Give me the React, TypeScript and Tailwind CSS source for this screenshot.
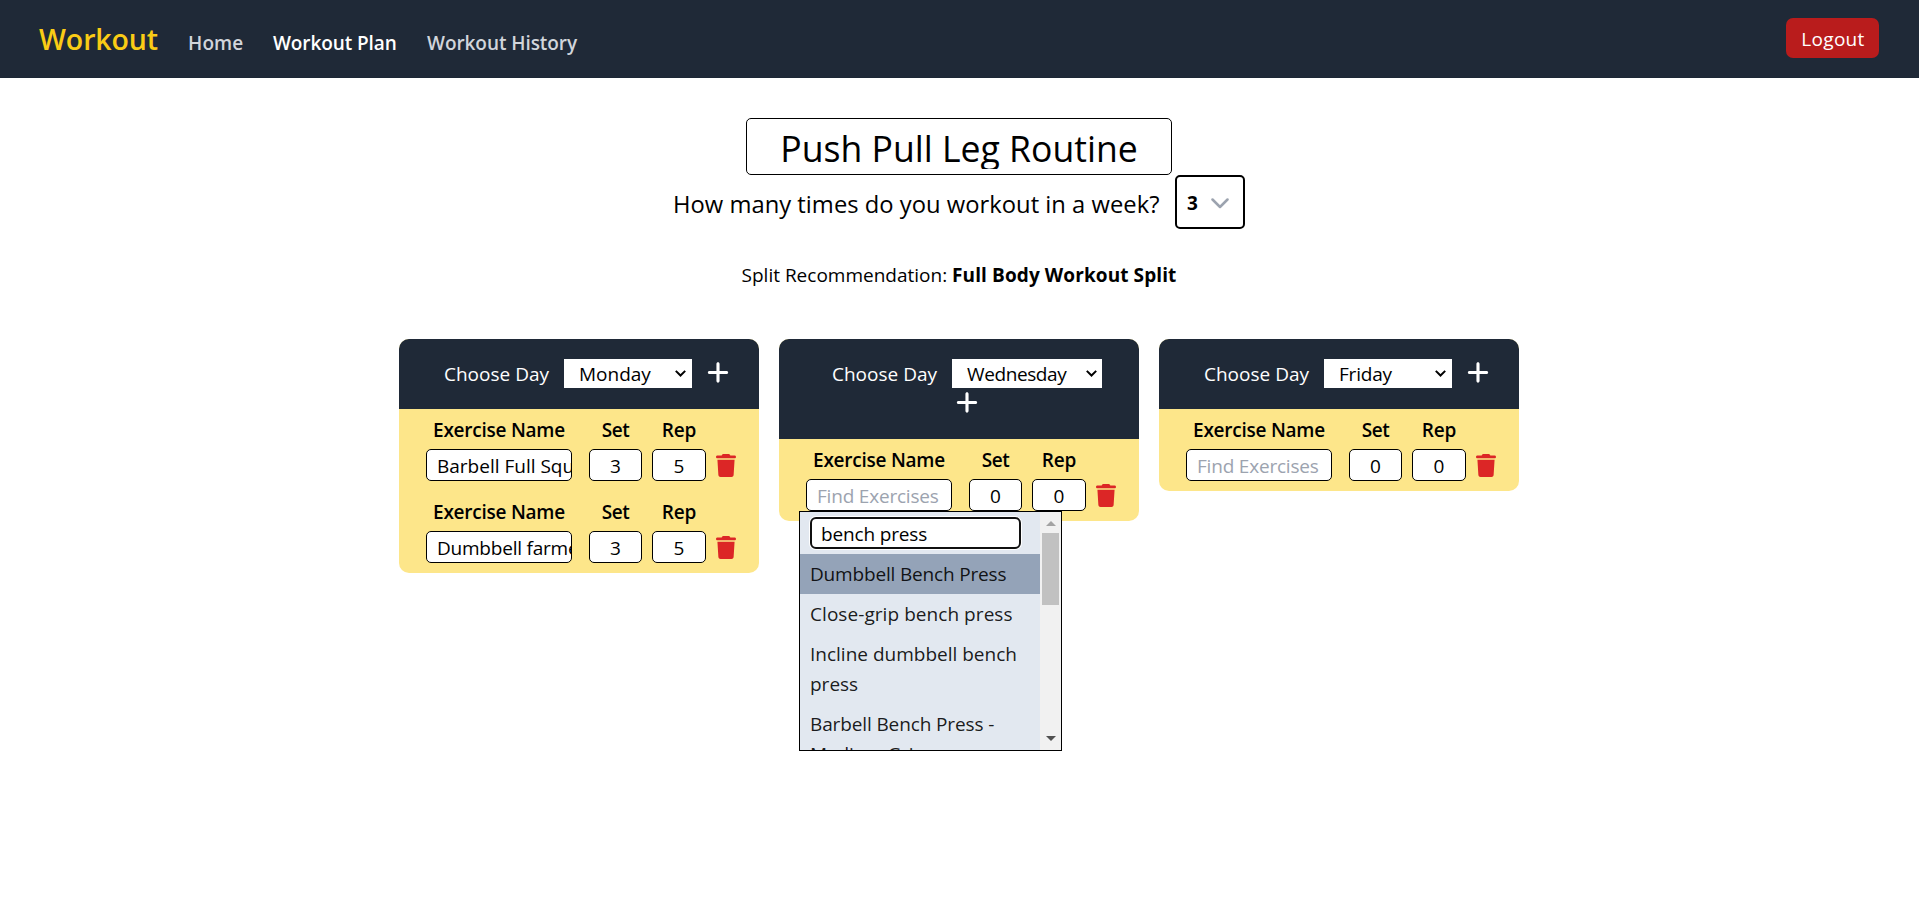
import type { ReactNode } from "react";
import { FaPlus, FaTrash } from "react-icons/fa6";

type Entry = { name: string; set: string; rep: string; nameTracking?: string };

const fieldBase =
  "h-8 rounded-[5px] border border-black bg-white pt-px text-[19px] text-black outline-none placeholder:text-[#9ca3af]";

function NavBar() {
  return (
    <nav className="flex h-[78px] items-center border-b border-[#1c2735] bg-[#1f2937] pl-[39px] pr-10">
      <a className="w-[149px] pt-0.5 text-[28.5px] font-semibold tracking-[-0.1px] text-[#facc15]">Workout</a>
      <div className="mt-[9px] flex flex-1 text-[19px] font-semibold leading-[30px] text-[#d1d5db]">
        <a className="w-[85px] tracking-[0.1px]">Home</a>
        <a className="w-[154px] tracking-[-0.1px] text-white">Workout Plan</a>
        <a className="tracking-[-0.07px]">Workout History</a>
      </div>
      <button className="mb-px h-10 w-[93px] rounded-[7px] bg-[#b91c1c] pl-px pt-[3px] text-[19px] tracking-[0.3px] text-white">
        Logout
      </button>
    </nav>
  );
}

function DaySelect({ day, className }: { day: string; className: string }) {
  return (
    <div className={`flex h-[29px] items-center justify-between bg-white leading-[31px] text-black ${className}`}>
      <span className="h-[29px]">{day}</span>
      <svg width="11" height="7" viewBox="0 0 11 7" fill="none" stroke="#000" strokeWidth="2">
        <path d="M0.8 0.9L5.5 5.5L10.2 0.9" />
      </svg>
    </div>
  );
}

function ExerciseRow({ entry, children }: { entry: Entry; children?: ReactNode }) {
  return (
    <div className="flex h-[82px] pl-[27px] pt-1.5 font-semibold leading-[30px]">
      <div className="relative flex w-[146px] flex-col gap-1 text-center">
        <span className="tracking-[-0.24px]">Exercise Name</span>
        <input
          readOnly
          placeholder="Find Exercises"
          value={entry.name}
          className={`${fieldBase} w-full pl-2.5 font-normal placeholder:tracking-[-0.2px] ${entry.nameTracking ?? ""}`}
        />
        {children}
      </div>
      <div className="ml-[17px] flex w-[53px] flex-col gap-1 text-center">
        <span className="tracking-[-0.5px]">Set</span>
        <input readOnly value={entry.set} className={`${fieldBase} w-full text-center font-normal`} />
      </div>
      <div className="ml-2.5 flex w-[54px] flex-col gap-1 text-center">
        <span className="tracking-[-0.2px]">Rep</span>
        <input readOnly value={entry.rep} className={`${fieldBase} w-full text-center font-normal`} />
      </div>
      <FaTrash className="ml-2.5 mt-[39px] h-[23px] w-5" color="#dc2626" />
    </div>
  );
}

function DayCard({
  day,
  headerClass,
  selectClass,
  plusClass,
  children,
}: {
  day: string;
  headerClass: string;
  selectClass: string;
  plusClass: string;
  children: ReactNode;
}) {
  return (
    <section className="w-[360px] rounded-[10px] bg-[#fde68a]">
      <header
        className={`flex flex-wrap content-start items-start gap-y-px rounded-t-[10px] bg-[#1f2937] pt-5 text-white ${headerClass}`}
      >
        <span className="h-[29px] w-[121px] pl-px leading-[31px]">Choose Day</span>
        <DaySelect day={day} className={selectClass} />
        <FaPlus className={`h-[25px] w-[22px] ${plusClass}`} />
      </header>
      {children}
    </section>
  );
}

function ExerciseMenu() {
  return (
    <div className="absolute left-[-7px] top-[66px] z-10 flex h-60 w-[263px] overflow-hidden border border-black bg-[#e2e8f0] text-left font-normal text-black/90">
      <div className="w-60">
        <div className="h-[42px] pl-2.5 pt-[5px]">
          <input
            readOnly
            value="bench press"
            className="block h-8 w-[211px] rounded-md border-2 border-[#101010] bg-white pl-[9px] pt-px tracking-[-0.15px] text-black shadow-[0_0_0_1px_#fff] outline-none"
          />
        </div>
        <div className="bg-[#94a3b8] px-2.5 py-[5px] tracking-[-0.17px]">Dumbbell Bench Press</div>
        <div className="px-2.5 py-[5px] tracking-[0.06px]">Close-grip bench press</div>
        <div className="px-2.5 py-[5px]">Incline dumbbell bench press</div>
        <div className="px-2.5 py-[5px] tracking-[-0.12px]">
          Barbell Bench Press -<br />
          Medium Grip
        </div>
      </div>
      <div className="flex w-[21px] flex-col items-center justify-between bg-[#f1f1f1] pb-[9px] pt-[9px]">
        <svg width="10" height="5" viewBox="0 0 10 5" fill="#a3a3a3">
          <path d="M0 5L5 0L10 5Z" />
        </svg>
        <div className="mb-auto mt-[7px] h-[72px] w-[17px] bg-[#c1c1c1]" />
        <svg width="10" height="5" viewBox="0 0 10 5" fill="#505050">
          <path d="M0 0L5 5L10 0Z" />
        </svg>
      </div>
    </div>
  );
}

export default function App() {
  return (
    <div className="min-h-screen bg-white font-['Open_Sans',sans-serif] text-[19px] text-black">
      <NavBar />
      <main className="flex flex-col items-center pr-px pt-10">
        <div className="h-[57px] w-[426px] rounded-[5px] border border-black pt-1">
          <div className="h-[46px] overflow-hidden text-center text-[35.6px] leading-[50px]">Push Pull Leg Routine</div>
        </div>
        <div className="flex h-[54px]">
          <p className="w-[502px] whitespace-nowrap text-[23.75px] leading-[58px] tracking-[0.02px]">
            How many times do you workout in a week?
          </p>
          <div className="flex w-[70px] items-center rounded-[5px] border-2 border-black pl-[10px] font-bold">
            <span className="w-6 pt-0.5">3</span>
            <svg
              className="mt-0.5"
              width="18"
              height="11"
              viewBox="0 0 18 11"
              fill="none"
              stroke="#9ca3af"
              strokeWidth="2.5"
              strokeLinecap="round"
              strokeLinejoin="round"
            >
              <path d="M1.5 1.5L9 9L16.5 1.5" />
            </svg>
          </div>
        </div>
        <p className="mt-[31px] leading-[30px]">
          Split Recommendation: <strong className="font-bold tracking-[0.1px]">Full Body Workout Split</strong>
        </p>
        <div className="mt-[49px] flex items-start gap-5">
          <DayCard day="Monday" headerClass="h-[70px] pl-11" selectClass="w-32 pl-[15px] pr-1.5" plusClass="ml-[15px] mt-px">
            <ExerciseRow entry={{ name: "Barbell Full Squat", set: "3", rep: "5" }} />
            <ExerciseRow
              entry={{ name: "Dumbbell farmer walk", set: "3", rep: "5", nameTracking: "tracking-[-0.22px]" }}
            />
          </DayCard>
          <DayCard
            day="Wednesday"
            headerClass="h-[100px] pl-[52px]"
            selectClass="w-[150px] pl-[15px] pr-[5px] tracking-[-0.4px]"
            plusClass="ml-[125px] mt-px"
          >
            <ExerciseRow entry={{ name: "", set: "0", rep: "0" }}>
              <ExerciseMenu />
            </ExerciseRow>
          </DayCard>
          <DayCard
            day="Friday"
            headerClass="h-[70px] pl-11"
            selectClass="w-32 pl-[15px] pr-1.5 tracking-[-0.2px]"
            plusClass="ml-[15px] mt-px"
          >
            <ExerciseRow entry={{ name: "", set: "0", rep: "0" }} />
          </DayCard>
        </div>
      </main>
    </div>
  );
}
